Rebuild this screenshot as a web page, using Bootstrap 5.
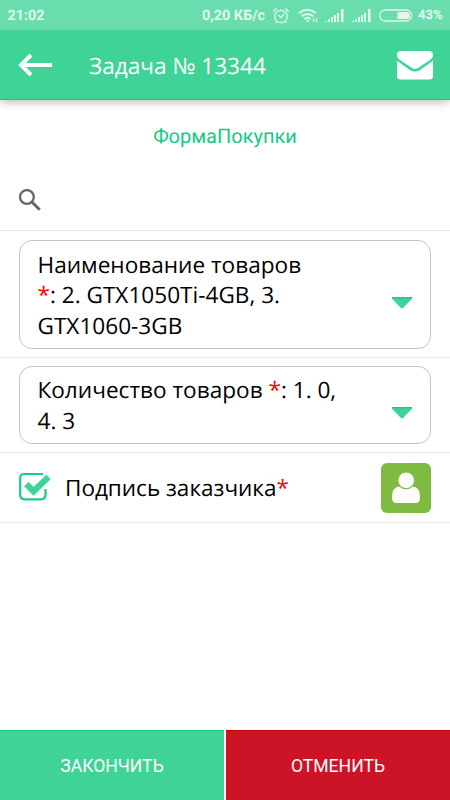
<!DOCTYPE html>
<html lang="ru">
<head>
<meta charset="utf-8">
<meta name="viewport" content="width=device-width, initial-scale=1">
<title>Задача № 13344</title>
<link href="https://cdn.jsdelivr.net/npm/bootstrap@5.3.0/dist/css/bootstrap.min.css" rel="stylesheet">
<style>
  body { font-family: "Open Sans", sans-serif; color: #000; height: 800px; overflow: hidden; text-rendering: geometricPrecision; }
  svg { display: block; flex: none; }
  .status-bar { height: 30px; background: #69ddae; color: #e1f8ef; font: 700 14.4px/30px Roboto, sans-serif; padding: 1px 0 0 7.5px; z-index: 1; }
  .speed { margin-right: 8px; }
  .battery-icon { margin-left: 6px; }
  .signal-icon { margin-left: 7px; }
  .wifi-icon { margin-left: 9px; margin-right: -1px; }
  .percent { font-size: 13px; margin-left: 4px; width: 32px; padding-top: 1px; }
  .app-bar { height: 70px; background: #3fd398; border-bottom: 1px solid #14cb84; padding: 0 17px 0 18px; box-shadow: 0 1px 10px rgba(0,0,0,.32); }
  .app-title { font-size: 22.6px; line-height: 30px; margin-left: 36px; padding-top: 2px; }
  .form-title { font: 400 20px/24px Roboto, sans-serif; color: #12cb84; height: 72px; padding-top: 24px; }
  .search-row { height: 58px; padding-left: 18px; }
  .field-row { border-top: 1px solid #e9e9e9; padding: 9px 19px 8px; }
  .field-row + .field-row { padding-top: 8px; }
  .select-box { border: 1px solid #c4c4c4; border-radius: 13px; padding: 9px 17px 7px 17.5px; font-size: 22.6px; line-height: 30.6px; }
  .select-text { width: 305px; }
  .tall-box { height: 109px; }
  .short-box { height: 78px; }
  .select-box svg { margin-top: 14px; }
  .req { color: #ff0000; }
  .sign-row { height: 71px; border-top: 1px solid #e9e9e9; border-bottom: 1px solid #e9e9e9; padding: 0 19px; font-size: 22.5px; }
  .check-icon { margin-top: -2px; }
  .sign-label { margin-left: 14px; }
  .person-btn { width: 50px; height: 50px; background: #80bb41; border-radius: 6px; }
  .action { height: 70px; width: 224px; border-radius: 0; border: 0; border-top: 1px solid #14cb84; background: #3fd398; color: #fff; font: 400 17.6px/70px Roboto, sans-serif; padding: 0; }
  .action.cancel { background: #cc1426; border-top-color: #c40000; }
</style>
<script src="https://cdn.jsdelivr.net/npm/bootstrap@5.3.0/dist/js/bootstrap.bundle.min.js"></script>
</head>
<body class="bg-white d-flex flex-column m-0">
<div class="status-bar d-flex align-items-center position-relative">
  <span>21:02</span>
  <span class="speed ms-auto">0,20 КБ/с</span>
  <svg width="16" height="16" viewBox="0 0 16 16" fill="none" stroke="#e1f8ef" stroke-width="1.3"><circle cx="8" cy="8.5" r="6.2"/><path d="M5 7l3 2.5L11.3 6M.8 4.2Q1 1.5 4 1M15.2 4.2Q15 1.5 12 1M3.8 13.2l-1 1.5M12.2 13.2l1 1.5"/></svg>
  <svg class="wifi-icon" width="21" height="16" viewBox="0 0 21 16" fill="none" stroke="#e1f8ef" stroke-width="2"><path d="M1 5.2Q9.500-1.600 18 5.200M3.700 8.300Q9.500 3.600 15.300 8.300M6.500 11Q9.500 8.700 12.500 11"/><path d="M7.600 12.200h3.800L9.500 14.400z" fill="#e1f8ef" stroke="none"/><path d="M15.800 10v4M18.600 10v4" stroke-width="1.200"/></svg>
  <svg class="signal-icon" width="20" height="14" viewBox="0 0 20 14" fill="#e1f8ef"><path d="M0 12h2v1H0zM3 10h2v3H3zM6 8h2v5H6zM9 6h2v7H9zM12 4h2v9h-2zM16 0h2.500v13h-2.500z"/></svg>
  <svg class="signal-icon" width="20" height="14" viewBox="0 0 20 14" fill="#e1f8ef"><path d="M0 12h2v1H0zM3 10h2v3H3zM6 8h2v5H6zM9 6h2v7H9zM12 4h2v9h-2zM16 0h2.500v13h-2.500z"/></svg>
  <svg class="battery-icon" width="36" height="13" viewBox="0 0 36 13"><rect x="1.700" y="1" width="32" height="11" rx="5.500" fill="none" stroke="#e1f8ef" stroke-width="1.300"/><path d="M19.500 3h9a3.500 3.500 0 0 1 0 7h-9z" fill="#e1f8ef"/></svg>
  <span class="percent">43%</span>
</div>
<header class="app-bar d-flex align-items-center text-white">
  <svg width="35" height="24" viewBox="0 0 35 24" fill="none" stroke="#fff" stroke-width="3.900"><path d="M34 12H3M13 2L3 12l10 10"/></svg>
  <div class="app-title">Задача № 13344</div>
  <svg class="ms-auto" width="36" height="30" viewBox="0 0 36 30" fill="#fff"><path d="M4 1h28q4 0 4 4 0 3-3 5L21 18q-3 2-6 0L3 10Q0 8 0 5q0-4 4-4z"/><path d="M0 10.500q1 1 2 1.700l11 7.800q5 3 10 0l11-7.800q1-.7 2-1.700V26q0 3.500-3.500 3.500h-29Q0 29.500 0 26z"/></svg>
</header>
<h1 class="form-title text-center m-0">ФормаПокупки</h1>
<div class="search-row d-flex align-items-center">
  <svg width="24" height="24" viewBox="0 0 24 24" fill="none" stroke="#666"><circle cx="8.900" cy="8" r="6.900" stroke-width="2.300"/><path d="M13.700 12.700l8 8" stroke-width="3"/></svg>
</div>
<div class="field-row">
  <div class="select-box tall-box d-flex align-items-center justify-content-between">
    <div class="select-text">Наименование товаров <br><span class="req">*</span>: 2. GTX1050Ti-4GB, 3. GTX1060-3GB</div>
    <svg width="22" height="12" viewBox="0 0 22 12"><path d="M1 .500h20v1.300L11.800 11.300h-1.600L1 1.800z" fill="#3fd398"/><path d="M1 0h20v1.300H1z" fill="#14cb84"/></svg>
  </div>
</div>
<div class="field-row">
  <div class="select-box short-box d-flex align-items-center justify-content-between">
    <div class="select-text">Количество товаров <span class="req">*</span>: 1. 0, 4. 3</div>
    <svg width="22" height="12" viewBox="0 0 22 12"><path d="M1 .500h20v1.300L11.800 11.300h-1.600L1 1.800z" fill="#3fd398"/><path d="M1 0h20v1.300H1z" fill="#14cb84"/></svg>
  </div>
</div>
<div class="sign-row d-flex align-items-center">
  <svg class="check-icon" width="32" height="30" viewBox="0 0 32 30"><path d="M24 2H5.500Q1.200 2 1.200 6v16.500q0 4.800 4.300 4.800h16.500q4.500 0 4.500-4.800V17" fill="none" stroke="#18cd88" stroke-width="2.200"/><path d="M7.300 12l7.300 7.300L29.500 5" fill="none" stroke="#3fd398" stroke-width="6.200"/></svg>
  <span class="sign-label">Подпись заказчика<span class="req">*</span></span>
  <div class="person-btn ms-auto d-flex align-items-center justify-content-center">
    <svg width="28" height="32" viewBox="0 0 28 32" fill="#fff"><path d="M7 14.500Q0 15 0 26q0 5 4.500 5h19q4.500 0 4.500-5 0-11-7-11.500-7 5.500-14 0z"/><circle cx="14.200" cy="8.300" r="8.300" stroke="#80bb41" stroke-width="1"/></svg>
  </div>
</div>
<div class="d-flex justify-content-between mt-auto">
  <button class="btn action">ЗАКОНЧИТЬ</button>
  <button class="btn action cancel">ОТМЕНИТЬ</button>
</div>
</body>
</html>
